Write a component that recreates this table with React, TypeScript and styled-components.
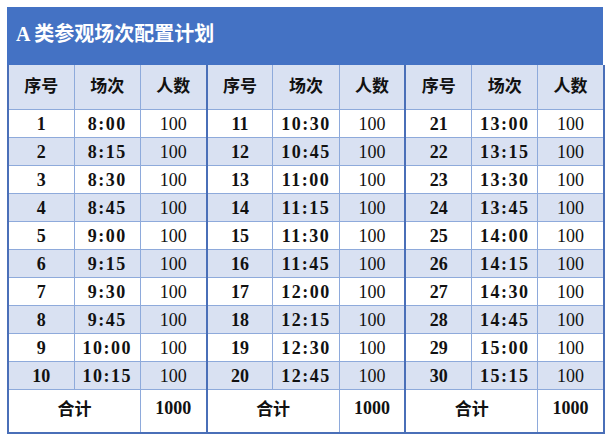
import React from "react";
import styled, { createGlobalStyle } from "styled-components";

const GlobalStyle = createGlobalStyle`
  body {
    margin: 0;
    background: #ffffff;
    font-family: "Liberation Serif", "Noto Sans CJK SC", serif;
  }
`;

const Page = styled.div`
  padding: 7px 0 0 7px;
`;

const Sheet = styled.div`
  width: 596px;
`;

const TitleBar = styled.div`
  height: 58px;
  background: #4472c4;
  color: #ffffff;
  display: flex;
  align-items: center;
  padding: 0 0 7px 9px;
  box-sizing: border-box;
  font-family: "Liberation Serif", "Noto Sans CJK SC", serif;
  font-size: 20px;
  font-weight: 700;
`;

const Table = styled.table`
  width: 596px;
  border-collapse: collapse;
  table-layout: fixed;
  border: 2px solid #4a6fb8;
  border-top: none;
`;

const HeadCell = styled.th<{ $groupEnd?: boolean }>`
  height: 38px;
  padding: 0 0 6px;
  background: #d9e1f2;
  color: #111111;
  font-family: "Noto Sans CJK SC", sans-serif;
  font-size: 17px;
  font-weight: 700;
  border-bottom: 1px solid #8eaadb;
  border-right: ${(p) => (p.$groupEnd ? "2px solid #4a6fb8" : "1px solid #8eaadb")};
`;

const Row = styled.tr<{ $striped?: boolean }>`
  background: ${(p) => (p.$striped ? "#d9e1f2" : "#ffffff")};
`;

const Cell = styled.td<{ $bold?: boolean; $groupEnd?: boolean }>`
  height: 27px;
  padding: 0;
  line-height: 20px;
  text-align: center;
  color: #111111;
  font-family: "Liberation Serif", serif;
  font-size: 18px;
  font-weight: ${(p) => (p.$bold ? 700 : 400)};
  border-bottom: 1px solid #8eaadb;
  border-right: ${(p) => (p.$groupEnd ? "2px solid #4a6fb8" : "1px solid #8eaadb")};
`;

const Time = styled.span`
  letter-spacing: 1.5px;
`;

const TotalCell = styled.td<{ $label?: boolean; $groupEnd?: boolean }>`
  height: 36px;
  padding: 0 0 6px;
  line-height: 20px;
  text-align: center;
  color: #111111;
  background: #ffffff;
  font-family: ${(p) =>
    p.$label ? '"Noto Sans CJK SC", sans-serif' : '"Liberation Serif", serif'};
  font-size: ${(p) => (p.$label ? "17px" : "18px")};
  font-weight: 700;
  border-right: ${(p) => (p.$groupEnd ? "2px solid #4a6fb8" : "1px solid #8eaadb")};
`;

const startMinutes = 8 * 60;

function slot(index: number) {
  const m = startMinutes + index * 15;
  const h = Math.floor(m / 60);
  const mm = String(m % 60).padStart(2, "0");
  return `${h}:${mm}`;
}

const groups = [0, 1, 2];

export default function App() {
  return (
    <Page>
      <GlobalStyle />
      <Sheet>
        <TitleBar>A 类参观场次配置计划</TitleBar>
        <Table>
          <colgroup>
            {Array.from({ length: 9 }).map((_, i) => (
              <col key={i} style={{ width: `${596 / 9}px` }} />
            ))}
          </colgroup>
          <thead>
            <tr>
              {groups.map((g) => (
                <React.Fragment key={g}>
                  <HeadCell>序号</HeadCell>
                  <HeadCell>场次</HeadCell>
                  <HeadCell $groupEnd={g < 2}>人数</HeadCell>
                </React.Fragment>
              ))}
            </tr>
          </thead>
          <tbody>
            {Array.from({ length: 10 }).map((_, r) => (
              <Row key={r} $striped={r % 2 === 1}>
                {groups.map((g) => {
                  const n = g * 10 + r;
                  return (
                    <React.Fragment key={g}>
                      <Cell $bold>{n + 1}</Cell>
                      <Cell $bold>
                        <Time>{slot(n)}</Time>
                      </Cell>
                      <Cell $groupEnd={g < 2}>100</Cell>
                    </React.Fragment>
                  );
                })}
              </Row>
            ))}
            <tr>
              {groups.map((g) => (
                <React.Fragment key={g}>
                  <TotalCell $label colSpan={2}>
                    合计
                  </TotalCell>
                  <TotalCell $groupEnd={g < 2}>1000</TotalCell>
                </React.Fragment>
              ))}
            </tr>
          </tbody>
        </Table>
      </Sheet>
    </Page>
  );
}
